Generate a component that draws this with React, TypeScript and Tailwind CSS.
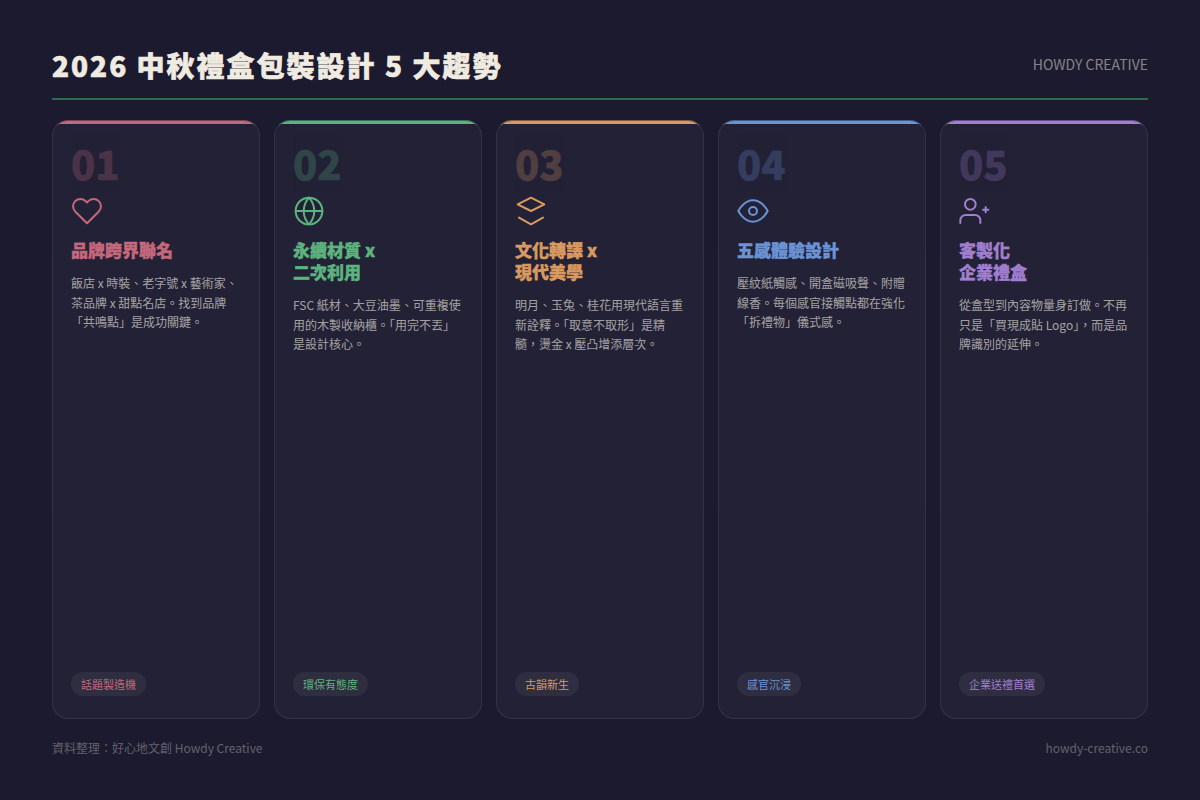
import React from "react";

const Svg = ({ children }: { children: React.ReactNode }) => (
  <svg width="32" height="32" viewBox="0 0 24 24" fill="none" stroke="currentColor" strokeWidth="1.5" strokeLinecap="round" strokeLinejoin="round">
    {children}
  </svg>
);

type Card = {
  n: string;
  title: React.ReactNode;
  desc: string;
  tag: string;
  icon: React.ReactNode;
  bar: string;
  edge: string;
  text: string;
};

const cards: Card[] = [
  {
    n: "01",
    title: "品牌跨界聯名",
    desc: "飯店 x 時裝、老字號 x 藝術家、茶品牌 x 甜點名店。找到品牌「共鳴點」是成功關鍵。",
    tag: "話題製造機",
    bar: "bg-[#c4687c]",
    edge: "border-t-[#c4687c]/50",
    text: "text-[#c4687c]",
    icon: (
      <Svg>
        <path d="M20.84 4.61a5.5 5.5 0 0 0-7.78 0L12 5.67l-1.06-1.06a5.5 5.5 0 0 0-7.78 7.78l1.06 1.06L12 21.23l7.78-7.78 1.06-1.06a5.5 5.5 0 0 0 0-7.78z" />
      </Svg>
    ),
  },
  {
    n: "02",
    title: <>永續材質 x<br />二次利用</>,
    desc: "FSC 紙材、大豆油墨、可重複使用的木製收納櫃。「用完不丟」是設計核心。",
    tag: "環保有態度",
    bar: "bg-[#5db37e]",
    edge: "border-t-[#5db37e]/50",
    text: "text-[#5db37e]",
    icon: (
      <Svg>
        <circle cx="12" cy="12" r="10" />
        <path d="M2 12h20" />
        <path d="M12 2a15.3 15.3 0 0 1 4 10 15.3 15.3 0 0 1-4 10 15.3 15.3 0 0 1-4-10 15.3 15.3 0 0 1 4-10z" />
      </Svg>
    ),
  },
  {
    n: "03",
    title: <>文化轉譯 x<br />現代美學</>,
    desc: "明月、玉兔、桂花用現代語言重新詮釋。「取意不取形」是精髓，燙金 x 壓凸增添層次。",
    tag: "古韻新生",
    bar: "bg-[#d9995f]",
    edge: "border-t-[#d9995f]/50",
    text: "text-[#d9995f]",
    icon: (
      <Svg>
        <path d="M12 2L2 7l10 5 10-5-10-5z" />
        <path d="M3 17l9 5 9-5" />
      </Svg>
    ),
  },
  {
    n: "04",
    title: "五感體驗設計",
    desc: "壓紋紙觸感、開盒磁吸聲、附贈線香。每個感官接觸點都在強化「拆禮物」儀式感。",
    tag: "感官沉浸",
    bar: "bg-[#6b93d6]",
    edge: "border-t-[#6b93d6]/50",
    text: "text-[#6b93d6]",
    icon: (
      <Svg>
        <path d="M1 12s4-8 11-8 11 8 11 8-4 8-11 8-11-8-11-8z" />
        <circle cx="12" cy="12" r="3" />
      </Svg>
    ),
  },
  {
    n: "05",
    title: <>客製化<br />企業禮盒</>,
    desc: "從盒型到內容物量身訂做。不再只是「買現成貼 Logo」，而是品牌識別的延伸。",
    tag: "企業送禮首選",
    bar: "bg-[#a07fcf]",
    edge: "border-t-[#a07fcf]/50",
    text: "text-[#a07fcf]",
    icon: (
      <Svg>
        <path d="M16 21v-2a4 4 0 0 0-4-4H5a4 4 0 0 0-4 4v2" />
        <circle cx="8.5" cy="7" r="4" />
        <path d="M20 9v4M18 11h4" />
      </Svg>
    ),
  },
];

export default function App() {
  return (
    <div className="font-['Noto_Sans_CJK_TC','Noto_Sans',sans-serif] w-[1200px] h-[800px] bg-[#1b1a2f] flex flex-col px-[52px] pt-[44px] pb-[43px] overflow-hidden">
      <header className="flex items-center justify-between border-b-2 border-b-[#2f6a4a] pb-[12px] h-[56px] shrink-0">
        <h1 className="text-[28px] leading-[44px] font-black tracking-[2px] text-[#f0ebe0] [-webkit-text-stroke:0.6px_#f0ebe0]">2026 中秋禮盒包裝設計 5 大趨勢</h1>
        <span className="mb-[2px] text-[14px] text-[#f0ebe0]/50">HOWDY CREATIVE</span>
      </header>
      <main className="mt-[20px] grid grid-cols-5 gap-[14px] flex-1 min-h-0">
        {cards.map((c) => (
          <article key={c.n} className={`flex flex-col overflow-hidden bg-[#222136] border border-white/[0.08] ${c.edge} rounded-[16px]`}>
            <div className={`h-[3px] shrink-0 ${c.bar}`} />
            <div className="flex flex-col flex-1 min-h-0 px-[18px] pt-[19px] pb-[22px]">
              <div className={`text-[40px] leading-[40px] font-black opacity-25 [-webkit-text-stroke:0.5px_currentColor] ${c.text}`}>{c.n}</div>
              <div className={`mt-[12px] h-[32px] ${c.text}`}>{c.icon}</div>
              <h2 className={`mt-[12px] text-[17px] leading-[22px] font-black [-webkit-text-stroke:0.4px_currentColor] ${c.text}`}>{c.title}</h2>
              <p className="mt-[12px] text-[12px] leading-[19.5px] text-[#f0ebe0]/65">{c.desc}</p>
              <span className={`mt-auto self-start bg-white/[0.06] rounded-full px-[10px] py-[4px] text-[11px] leading-[16px] ${c.text}`}>{c.tag}</span>
            </div>
          </article>
        ))}
      </main>
      <footer className="mt-[20px] flex justify-between text-[12px] leading-[18px] text-[#f0ebe0]/35 shrink-0">
        <span>資料整理：好心地文創 Howdy Creative</span>
        <span>howdy-creative.co</span>
      </footer>
    </div>
  );
}
